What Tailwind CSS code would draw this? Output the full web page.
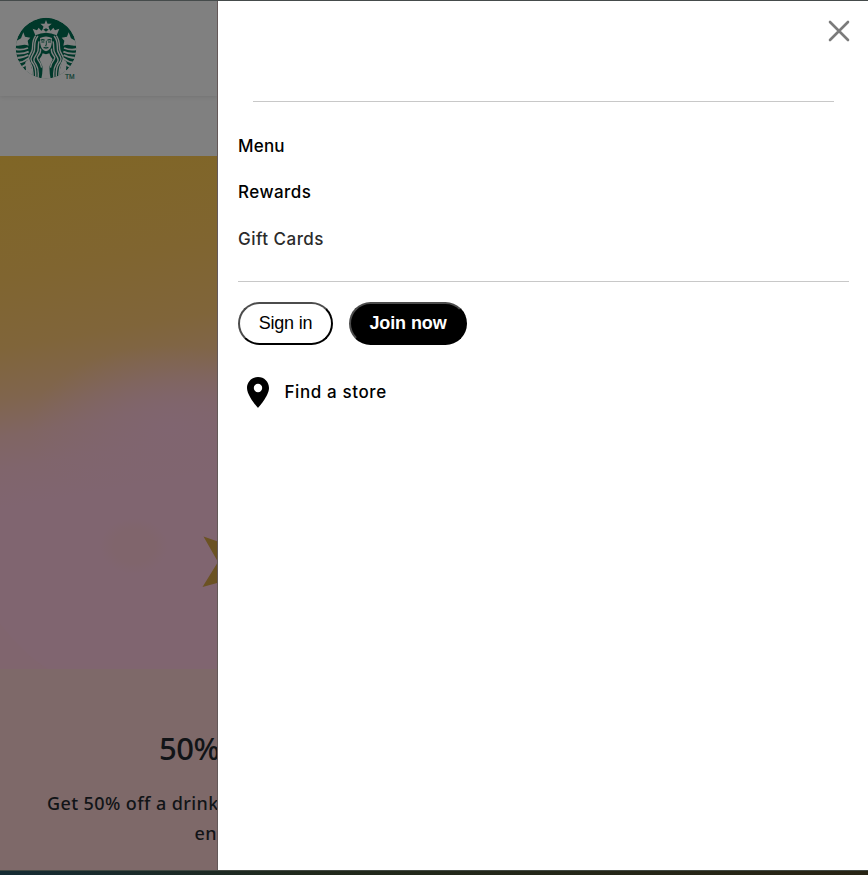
<!DOCTYPE html>
<html lang="en">
<head>
<meta charset="utf-8">
<title>Starbucks</title>
<script src="https://cdn.jsdelivr.net/npm/@tailwindcss/browser@4"></script>
</head>
<body class="flex h-[875px] w-[868px] flex-col overflow-hidden bg-white">
<div class="h-px shrink-0 bg-[#454b4b]"></div>
<div class="flex h-[869px] shrink-0">
  <div class="flex w-[217px] shrink-0 flex-col overflow-hidden bg-[#808080]">
    <header class="h-[95px] shrink-0 pt-[17px] pl-4 shadow-[0_1px_4px_rgba(0,0,0,0.1)]">
      <svg class="h-[61px] w-[61px] overflow-visible" viewBox="48 54 183 183">
        <defs><clipPath id="disc"><circle cx="138" cy="144.500" r="91"/></clipPath></defs>
        <g clip-path="url(#disc)">
          <circle cx="138" cy="144.500" r="91" fill="#00382a"/>
          <g fill="#808080">
            <path d="M138 60l4.500 11 12.500 .5-9.500 8 3.500 11.500-11-6.500-11 6.500 3.500-11.500-9.500-8 12.500-.5z"/>
            <path d="M98 86l13 5 5-8 8 9 5-4 9 7 9-7 5 4 8-9 5 8 13-5-8 20q-32-16-64 0z"/>
            <path d="M70 97l5 13 16 3-8 9 3 15q-12-5-22-1-10 2-20 0l5-13 14-8zM206 97l-5 13-16 3 8 9-3 15q12-5 22-1 10 2 20 0l-5-13-14-8z"/>
            <path d="M76 186l11-9 10 34 2 30H80zM200 186l-11-9-10 34-2 30h19z"/>
          </g>
          <g fill="none" stroke="#808080" stroke-width="5.500">
            <path d="M46 147q18 5 38-3M46 160q22 3 40-5M49 174q20 0 36-9M55 188q17-2 30-13M64 202q12-5 22-17M76 216q8-7 14-19M230 147q-18 5-38-3M230 160q-22 3-40-5M227 174q-20 0-36-9M221 188q-17-2-30-13M212 202q-12-5-22-17M200 216q-8-7-14-19"/>
          </g>
          <g fill="none" stroke="#808080" stroke-width="4.200">
            <path d="M107 107c-15 20-5 34-12 48-8 15-14 20-3 36 11 17 4 27 9 50M114 108c-17 20-5 36-13 50-8 15-13 20-1 34 11 16 5 28 8 49M117 124c-5 18 2 25-7 38-8 13-13 18-2 31 11 17 5 28 7 48M121 146c4 14-6 18-9 26-2 10 14 15 12 31"/>
            <path d="M169 107c15 20 5 34 12 48 8 15 14 20 3 36-11 17-4 27-9 50M162 108c17 20 5 36 13 50 8 15 13 20 1 34-11 16-5 28-8 49M159 124c5 18-2 25 7 38 8 13 13 18 2 31-11 17-5 28-7 48M155 146c-4 14 6 18 9 26 2 10-14 15-12 31"/>
          </g>
          <path fill="#808080" d="M120 114q18-9 36 0 1 22-6 32-6 7-12 8-6-1-12-8-7-10-6-32z"/>
          <path fill="#808080" d="M128 160q10 5 20 0 2 9 10 18-5 12-9 20-2 16 4 43h-30q6-27 4-43-4-8-9-20 8-9 10-18z"/>
          <path fill="none" stroke="#00382a" stroke-width="3.500" d="M122 121q6-4 12 0M142 121q6-4 12 0M124 126h9M144 126h9"/>
          <path fill="none" stroke="#00382a" stroke-width="2.500" d="M139 122v14h-4M131 143q7-3 14 0-7 4-14 0"/>
        </g>
        <text x="195" y="236" font-family="Liberation Sans, sans-serif" font-size="20" fill="#0a3c2f" stroke="#0a3c2f" stroke-width=".5">TM</text>
      </svg>
    </header>
    <div class="h-[60px] shrink-0"></div>
    <section class="h-[513px] shrink-0 bg-[linear-gradient(170deg,#806626_0%,#806530_22%,#80653a_35%,#80654d_44%,#806563_51%,#80656c_57%,#806570_64%,#806570_100%)]">
      <svg class="block h-[513px] w-[217px]" viewBox="0 156 217 513">
        <defs>
          <radialGradient id="glow"><stop offset="0" stop-color="#806570"/><stop offset=".4" stop-color="#806570" stop-opacity=".65"/><stop offset="1" stop-color="#806570" stop-opacity="0"/></radialGradient>
          <radialGradient id="smudge"><stop offset=".6" stop-color="#80656c"/><stop offset="1" stop-color="#80656c" stop-opacity="0"/></radialGradient>
        </defs>
        <ellipse cx="170" cy="430" rx="140" ry="85" fill="url(#glow)"/>
        <ellipse cx="134" cy="546" rx="34" ry="28" fill="url(#smudge)"/>
        <path d="M0 624q24 31 48 45H0z" fill="#80656e"/>
        <path d="M203.500 536.500l29 10 28-24-3 39 3 39-28-22-30 8.500 15.500-25z" fill="#6b5223"/>
      </svg>
    </section>
    <section class="flex-1 bg-[#7e6969] pt-[59px] font-['Noto_Sans',sans-serif] whitespace-nowrap text-[#111417]">
      <h2 class="pl-[159px] text-[31px] leading-10 font-medium tracking-[-0.5px]">50%</h2>
      <p class="mt-5 pl-[47px] text-[18px] leading-[30px] font-medium tracking-[0.4px]">Get 50% off a drink</p>
      <p class="pl-[194.5px] text-[18px] leading-[30px] font-medium tracking-[0.3px]">en</p>
    </section>
  </div>
  <aside class="flex flex-1 flex-col border-l border-[#635858] bg-white font-['Inter','Liberation_Sans',sans-serif] text-black">
    <div class="flex h-[100px] justify-end pt-[19px] pr-[18px]">
      <svg class="size-[22px]" viewBox="0 0 22 22" fill="none" stroke="#7b7b7b" stroke-width="2.600" stroke-linecap="round"><path d="M2 2l18 18M20 2L2 20"/></svg>
    </div>
    <hr class="mr-[34px] ml-[35px] border-t border-[#c8c8c8]">
    <nav class="flex flex-col items-start pt-8 pl-5 text-[17px] leading-6 font-medium">
      <a class="tracking-[0.2px]">Menu</a>
      <a class="mt-[22px] tracking-[0.45px]">Rewards</a>
      <a class="mt-[23px] tracking-[0.48px] text-[#2b2b2b]">Gift Cards</a>
    </nav>
    <hr class="mt-[30px] mr-[19px] ml-5 border-t border-[#c8c8c8]">
    <div class="mt-5 ml-5 flex gap-4 font-['Liberation_Sans',sans-serif] text-[18px]">
      <button class="h-[43px] w-[95px] rounded-full border-2 border-black border-t-[#4c4c4c] border-l-[#4c4c4c] tracking-[-0.2px]">Sign in</button>
      <button class="h-[43px] w-[118px] rounded-full border-2 border-black border-t-[#4c4c4c] border-l-[#4c4c4c] bg-black font-bold tracking-[-0.1px] text-white">Join now</button>
    </div>
    <a class="mt-8 ml-[29px] flex h-[31px] gap-[15.500px] text-[17px] leading-[30px] font-medium">
      <svg class="h-[31px] w-[22px]" viewBox="0 0 22 31"><path fill-rule="evenodd" d="M11 0C4.800 0 0 4.800 0 11c0 8 11 20 11 20s11-12 11-20C22 4.800 17.200 0 11 0zm0 6.800a4.200 4.200 0 1 1 0 8.400 4.200 4.200 0 0 1 0-8.400z"/></svg>
      <span class="tracking-[0.6px]">Find a store</span>
    </a>
  </aside>
</div>
<footer class="flex-1 border-t border-[#434a43] bg-linear-to-r from-[#152c34] via-[#20291c] via-35% to-[#282414]"></footer>
</body>
</html>
